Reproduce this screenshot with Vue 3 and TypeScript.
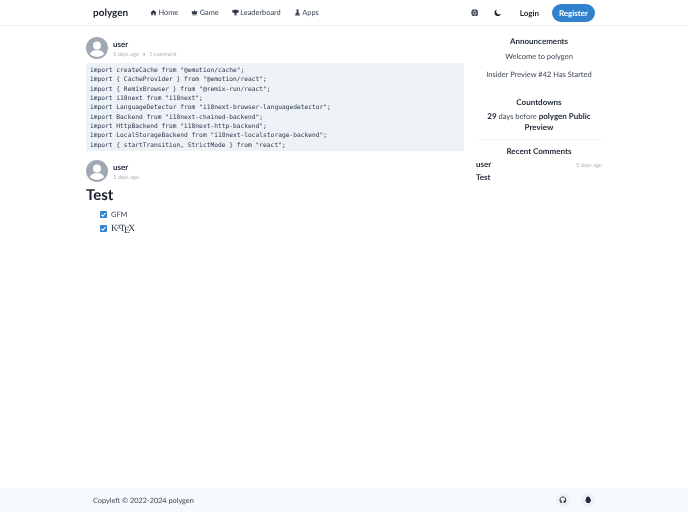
<script setup lang="ts">
const navLinks = [
  { label: 'Home', d: 'M8 2 .5 8.500h2.300V14.500h3.700v-4h3v4h3.700V8.500h2.300z' },
  { label: 'Game', d: 'M8 2.500l2.200 4L14.800 4 13 12H3L1.200 4l4.600 2.500zM3 13h10v1.500H3z' },
  { label: 'Leaderboard', d: 'M4 1.500h8V3h3.500v2c0 2.200-1.700 3.600-3.800 3.800C11 10.300 10 11 9 11.300v1.400h2.500v1.800h-7v-1.800H7v-1.400C6 11 5 10.300 4.300 8.800 2.200 8.600.5 7.200.5 5V3H4z' },
  { label: 'Apps', d: 'M5 1h6v1.500h-1V9h2.500v3.500H3.500V9H6V2.500H5zM2.500 13.300h11v1.500h-11z' },
]
const code = [
  'import createCache from "@emotion/cache";',
  'import { CacheProvider } from "@emotion/react";',
  'import { RemixBrowser } from "@remix-run/react";',
  'import i18next from "i18next";',
  'import LanguageDetector from "i18next-browser-languagedetector";',
  'import Backend from "i18next-chained-backend";',
  'import HttpBackend from "i18next-http-backend";',
  'import LocalStorageBackend from "i18next-localstorage-backend";',
  'import { startTransition, StrictMode } from "react";',
].join('\n')
</script>

<template>
  <div class="page">
    <header class="nav">
      <div class="nav-inner">
        <span class="logo">polygen</span>
        <nav class="links">
          <a v-for="l in navLinks" :key="l.label" class="link">
            <svg viewBox="0 0 16 16" class="ico"><path :d="l.d" fill="currentColor" /></svg>{{ l.label }}
          </a>
        </nav>
        <div class="right">
          <svg viewBox="0 0 16 16" class="act" fill="none">
            <circle cx="8" cy="8" r="7.500" fill="#1f2937" />
            <path d="M.5 5.800h15M.5 10.200h15M8 .5C5 5 5 11 8 15.500M8 .5c3 4.500 3 10.500 0 15" stroke="#fff" stroke-width="1" />
          </svg>
          <svg viewBox="0 0 16 16" class="act moon"><path d="M6.500 1a7.200 7.200 0 1 0 8.500 9A6.200 6.200 0 0 1 6.500 1z" fill="#1f2937" /></svg>
          <span class="login">Login</span>
          <span class="register">Register</span>
        </div>
      </div>
    </header>

    <div class="content">
      <main class="main">
        <article class="post">
          <div class="head">
            <svg viewBox="0 0 22 22" class="avatar">
              <circle cx="11" cy="11" r="11" fill="#a0a7b5" />
              <circle cx="11" cy="8.500" r="4" fill="#fff" />
              <path d="M3.800 17c1-2.600 3.700-4 7.200-4s6.200 1.400 7.200 4a10 10 0 0 1-14.400 0z" fill="#fff" />
            </svg>
            <div class="who">
              <div class="name">user</div>
              <div class="meta">5 days ago <span class="dot">•</span> 1 comment</div>
            </div>
          </div>
          <pre class="code">{{ code }}</pre>
        </article>

        <article class="post second">
          <div class="head">
            <svg viewBox="0 0 22 22" class="avatar">
              <circle cx="11" cy="11" r="11" fill="#a0a7b5" />
              <circle cx="11" cy="8.500" r="4" fill="#fff" />
              <path d="M3.800 17c1-2.600 3.700-4 7.200-4s6.200 1.400 7.200 4a10 10 0 0 1-14.400 0z" fill="#fff" />
            </svg>
            <div class="who">
              <div class="name">user</div>
              <div class="meta">5 days ago</div>
            </div>
          </div>
          <h1 class="title">Test</h1>
          <ul class="tasks">
            <li><span class="check"><svg viewBox="0 0 8 8"><path d="M1.500 4.200 3.300 6l3.200-4" fill="none" stroke="#fff" stroke-width="1.300" /></svg></span>GFM</li>
            <li><span class="check"><svg viewBox="0 0 8 8"><path d="M1.500 4.200 3.300 6l3.200-4" fill="none" stroke="#fff" stroke-width="1.300" /></svg></span><span class="katex">K<sup>A</sup>T<sub>E</sub>X</span></li>
          </ul>
        </article>
      </main>

      <aside class="side">
        <section class="block">
          <h2>Announcements</h2>
          <p>Welcome to polygen</p>
          <p>Insider Preview #42 Has Started</p>
        </section>
        <section class="block count">
          <h2>Countdowns</h2>
          <p class="cd"><b>29</b> days before <b>polygen Public Preview</b></p>
        </section>
        <section class="block recent">
          <h2>Recent Comments</h2>
          <div class="row"><b>user</b><span class="time">5 days ago</span></div>
          <div class="row test"><b>Test</b></div>
        </section>
      </aside>
    </div>

    <footer class="foot">
      <div class="foot-inner">
        <span>Copyleft © 2022-2024 polygen</span>
        <div class="foot-icons">
          <span class="round">
            <svg viewBox="0 0 16 16"><path fill-rule="evenodd" d="M8 1a7 7 0 0 0-2.200 13.600v-2.300c-1.900.4-2.400-1.200-2.400-1.200-.3-.8-.8-1-.8-1-.6-.4 0-.4 0-.4.700.1 1.100.7 1.100.7.600 1.100 1.700.8 2.100.6.100-.5.300-.8.500-1-1.600-.2-3.200-.8-3.200-3.500 0-.8.300-1.400.7-1.900-.1-.2-.3-.9.100-1.900 0 0 .6-.2 2 .7a7 7 0 0 1 3.600 0c1.400-.9 2-.7 2-.7.400 1 .2 1.700.1 1.900.5.500.7 1.100.7 1.900 0 2.700-1.600 3.300-3.200 3.500.3.200.5.700.5 1.300v3.300A7 7 0 0 0 8 1z" fill="#1f2937" /></svg>
          </span>
          <span class="round">
            <svg viewBox="0 0 16 16"><path d="M8 1c-2.300 0-3.700 1.800-3.700 4.200 0 .6-.1 1-.4 1.500-.5.900-1.200 2.100-1.200 3.300 0 1 .5 1.300.9 1.100l.9-.7c.2.800.6 1.500 1.200 2-.7.200-1.400.6-1.400 1.100 0 .7 1.500.7 2.500.6.600-.1 1-.2 1.600-.2s1 .1 1.600.2c1 .1 2.500.1 2.500-.6 0-.5-.7-.9-1.400-1.100.6-.5 1-1.200 1.200-2l.9.700c.4.200.9-.1.900-1.100 0-1.200-.7-2.400-1.200-3.300-.3-.5-.4-.9-.4-1.500C11.700 2.800 10.300 1 8 1z" fill="#1f2937" /></svg>
          </span>
        </div>
      </div>
    </footer>
  </div>
</template>

<style>
body { background: #fff; }
</style>

<style scoped>
.page {
  width: 688px;
  height: 512px;
  display: flex;
  flex-direction: column;
  font-family: "Lato", "Noto Sans", sans-serif;
  color: #3b4556;
  background: #fff;
  overflow: hidden;
  filter: blur(.25px);
  text-rendering: geometricPrecision;
}
.nav {
  height: 25px;
  border-bottom: 1px solid #edf0f3;
  flex: none;
}
.nav-inner {
  width: 502px;
  height: 25px;
  margin-left: 93px;
  display: flex;
  align-items: center;
}
.logo {
  font-size: 10px;
  font-weight: 700;
  color: #1a202c;
  width: 57px;
}
.links { display: flex; gap: 13px; }
.link {
  font-size: 7.400px;
  color: #3b4556;
  display: flex;
  align-items: center;
  gap: 1.500px;
}
.ico { width: 7px; height: 7px; color: #2d3748; }
.right {
  margin-left: auto;
  display: flex;
  align-items: center;
}
.act { width: 7.500px; height: 7.500px; }
.moon { margin-left: 16px; }
.login {
  margin-left: 18px;
  font-size: 8px;
  font-weight: 700;
  color: #1f2937;
}
.register {
  margin-left: 13px;
  width: 43px;
  height: 18px;
  border-radius: 9px;
  background: #3182ce;
  color: #fff;
  font-size: 8px;
  font-weight: 700;
  display: flex;
  align-items: center;
  justify-content: center;
}
.content {
  flex: 1;
  margin-left: 86px;
  width: 516px;
  display: flex;
  gap: 12px;
  padding-top: 11px;
  box-sizing: border-box;
}
.main { width: 378px; flex: none; }
.head { display: flex; align-items: center; gap: 5px; height: 22px; }
.avatar { width: 22px; height: 22px; flex: none; }
.who { padding-top: 1px; }
.name { font-size: 8px; font-weight: 700; color: #1f2937; line-height: 11px; }
.meta { font-size: 5.600px; color: #a9afba; line-height: 9px; }
.dot { margin: 0 2px; }
.code {
  margin: 4px 0 0;
  height: 88px;
  box-sizing: border-box;
  padding: 3px 4px;
  background: #edf2f7;
  border-radius: 4px 4px 0 0;
  font-family: "DejaVu Sans Mono", monospace;
  font-size: 6.250px;
  line-height: 9.350px;
  color: #2d3748;
  overflow: hidden;
}
.second { margin-top: 9px; }
.title {
  margin: 3px 0 0;
  font-size: 15px;
  line-height: 20px;
  font-weight: 700;
  color: #1a202c;
}
.tasks {
  list-style: none;
  margin: 2px 0 0;
  padding: 0 0 0 14px;
  font-size: 7.400px;
  color: #3b4556;
}
.tasks li { display: flex; align-items: center; gap: 4px; height: 14.500px; }
.check {
  width: 7px;
  height: 7px;
  background: #3182ce;
  border-radius: 1px;
  display: flex;
}
.check svg { width: 7px; height: 7px; }
.katex { font-family: "Liberation Serif", serif; font-size: 9.500px; color: #2d3748; }
.katex sup { font-size: 6.500px; vertical-align: 2px; line-height: 0; margin: 0 -1.500px; }
.katex sub { font-size: 9.500px; vertical-align: -2px; line-height: 0; margin: 0 -1.500px; }
.side { width: 126px; flex: none; text-align: center; margin-top: -1px; }
h2 {
  margin: 0;
  font-size: 8px;
  font-weight: 700;
  color: #1f2937;
  line-height: 11px;
}
.block p {
  margin: 0;
  font-size: 7.500px;
  line-height: 11px;
  color: #3b4556;
}
.block h2 + p { margin-top: 4px; }
.block p + p { margin-top: 7px; }
.count { margin-top: 17px; }
.cd b, .row b { font-weight: 700; color: #1f2937; font-size: 8px; }
.block h2 + .cd { margin-top: 3px; }
.recent {
  margin-top: 6px;
  padding-top: 6px;
  border-top: 1px solid #f3f4f6;
}
.row {
  display: flex;
  justify-content: space-between;
  align-items: flex-end;
  font-size: 8px;
  margin-top: 2px;
  line-height: 10px;
}
.test { margin-top: 3px; }
.time { font-size: 5.600px; color: #a9afba; line-height: 7px; }
.foot {
  height: 24px;
  background: #f7fafc;
  flex: none;
}
.foot-inner {
  margin-left: 93px;
  width: 502px;
  height: 100%;
  display: flex;
  align-items: center;
  justify-content: space-between;
  font-size: 7.300px;
  color: #3b4556;
}
.foot-icons { display: flex; gap: 11px; }
.round {
  width: 14px;
  height: 14px;
  border-radius: 50%;
  background: #edf2f7;
  display: flex;
  align-items: center;
  justify-content: center;
}
.round svg { width: 8px; height: 8px; }
</style>
